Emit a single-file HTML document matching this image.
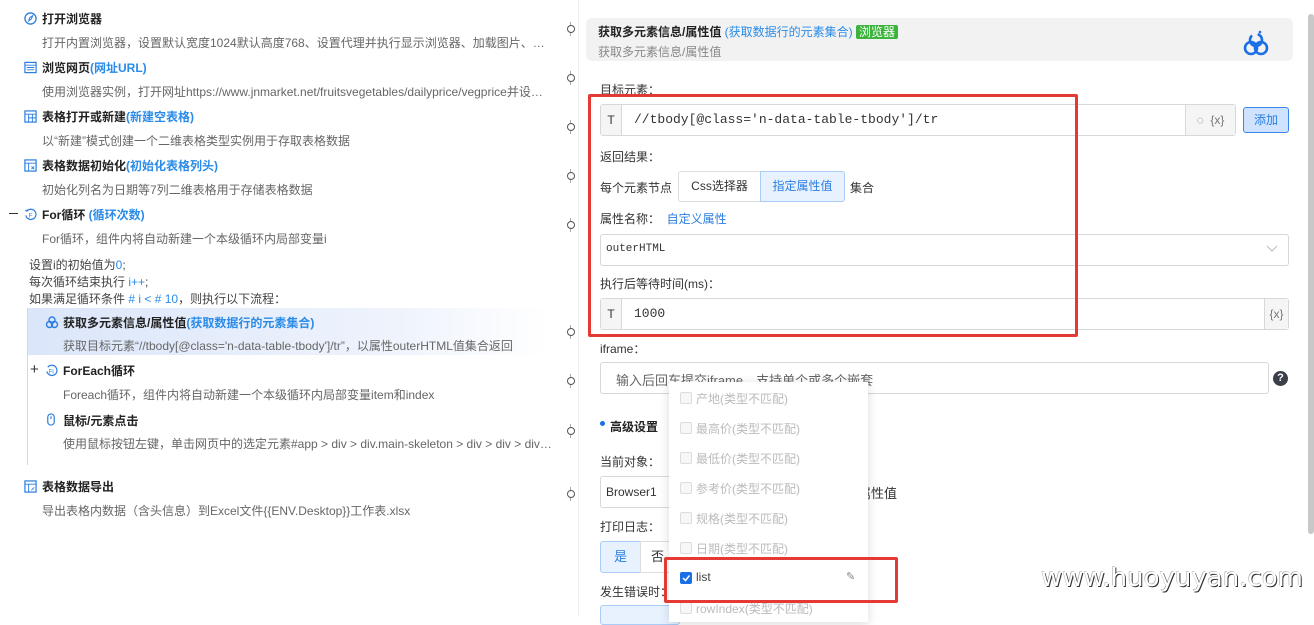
<!DOCTYPE html>
<html><head><meta charset="utf-8"><style>
*{box-sizing:border-box;margin:0;padding:0}
body{width:1314px;height:616px;overflow:hidden;background:#fff;font-family:"Liberation Sans","Noto Sans CJK SC",sans-serif;position:relative;color:#333}
.a{position:absolute;white-space:nowrap}
.t{font-size:12px;font-weight:bold;color:#222}
.d{font-size:12px;color:#666}
.b{color:#2a8be8}
.ic{position:absolute;width:13px;height:13px}
.con{position:absolute;width:6px;height:14px}
.con:before{content:"";position:absolute;left:0;top:3px;width:6px;height:6px;border:1px solid #555;border-radius:50%}
.con:after{content:"";position:absolute;left:2.5px;top:0;width:1px;height:14px;background:#555;clip-path:polygon(0 0,100% 0,100% 25%,0 25%,0 70%,100% 70%,100% 100%,0 100%)}
.lab{font-size:12px;color:#333}
.box{position:absolute;border:1px solid #d8d8d8;border-radius:3px;background:#fff}
.cell{position:absolute;top:0;bottom:0;background:#f5f5f5;border-right:1px solid #d8d8d8;font-size:12px;color:#333;display:flex;align-items:center;justify-content:center}
.mono{font-family:"Liberation Mono","DejaVu Sans Mono",monospace}
.cb{position:absolute;left:680px;width:12px;height:12px;border:1px solid #ddd;border-radius:2px;background:#f7f7f7}
.it{position:absolute;left:696px;font-size:12px;color:#bbb}
</style></head><body>

<!-- left panel -->
<svg class="ic" style="left:24px;top:12px" viewBox="0 0 14 14"><circle cx="7" cy="7" r="6" fill="none" stroke="#2a7de1" stroke-width="1.4"/><path d="M5 9.5l1.3-3.5 3-2-1.3 3.5z" fill="none" stroke="#2a7de1" stroke-width="1.1"/></svg>
<div class="a t" style="left:42px;top:10px">打开浏览器</div>
<div class="a d" style="left:42px;top:34px">打开内置浏览器，设置默认宽度1024默认高度768、设置代理并执行显示浏览器、加载图片、…</div>

<svg class="ic" style="left:24px;top:61px" viewBox="0 0 14 14"><rect x="1" y="1.5" width="12" height="11" fill="none" stroke="#2a7de1" stroke-width="1.3"/><path d="M1 4.5h12M3 7h8M3 9.5h8" stroke="#2a7de1" stroke-width="1"/></svg>
<div class="a t" style="left:42px;top:59px">浏览网页<span class="b">(网址URL)</span></div>
<div class="a d" style="left:42px;top:83px">使用浏览器实例，打开网址https://www.jnmarket.net/fruitsvegetables/dailyprice/vegprice并设…</div>

<svg class="ic" style="left:24px;top:110px" viewBox="0 0 14 14"><rect x="1" y="1" width="12" height="12" fill="none" stroke="#2a7de1" stroke-width="1.3"/><path d="M1 4.5h12M5 4.5v8.5M5 8.5h8M9 4.5v8.5" stroke="#2a7de1" stroke-width="1"/></svg>
<div class="a t" style="left:42px;top:108px">表格打开或新建<span class="b">(新建空表格)</span></div>
<div class="a d" style="left:42px;top:132px">以“新建”模式创建一个二维表格类型实例用于存取表格数据</div>

<svg class="ic" style="left:24px;top:159px" viewBox="0 0 14 14"><rect x="1" y="1" width="12" height="12" fill="none" stroke="#2a7de1" stroke-width="1.3"/><path d="M1 4.5h12M5 4.5v8.5M8 8l3 3M8 11l3-3" stroke="#2a7de1" stroke-width="1"/></svg>
<div class="a t" style="left:42px;top:157px">表格数据初始化<span class="b">(初始化表格列头)</span></div>
<div class="a d" style="left:42px;top:181px">初始化列名为日期等7列二维表格用于存储表格数据</div>

<div class="a" style="left:9px;top:213px;width:9px;height:1px;background:#333"></div>
<svg class="ic" style="left:24px;top:208px" viewBox="0 0 14 14"><path d="M3 3.5A5.5 5.5 0 1 1 2 8" fill="none" stroke="#2a7de1" stroke-width="1.3"/><path d="M1 2.5l2 1 .5-2" fill="none" stroke="#2a7de1" stroke-width="1"/><text x="5" y="10" font-size="7" fill="#2a7de1" font-family="Liberation Sans">F</text></svg>
<div class="a t" style="left:42px;top:206px">For循环 <span class="b">(循环次数)</span></div>
<div class="a d" style="left:42px;top:230px">For循环，组件内将自动新建一个本级循环内局部变量i</div>

<div class="a" style="left:29px;top:257px;font-size:12px;color:#444;line-height:17px">设置i的初始值为<span class="b">0</span>;<br>每次循环结束执行 <span class="b">i++</span>;<br>如果满足循环条件 <span class="b"># i &lt; # 10</span>，则执行以下流程：</div>

<div class="a" style="left:27px;top:308px;width:1px;height:157px;background:#d0d8e8"></div>
<div class="a" style="left:28px;top:308px;width:520px;height:47px;background:linear-gradient(90deg,#dbe6fa,#eef3fc 70%,#fff)"></div>
<svg class="ic" style="left:45px;top:315px;width:14px;height:14px" viewBox="0 0 14 14"><circle cx="7" cy="5" r="3" fill="none" stroke="#2a7de1" stroke-width="1.4"/><circle cx="4.5" cy="9.5" r="3" fill="none" stroke="#2a7de1" stroke-width="1.4"/><circle cx="9.5" cy="9.5" r="3" fill="none" stroke="#2a7de1" stroke-width="1.4"/></svg>
<div class="a t" style="left:63px;top:314px">获取多元素信息/属性值<span class="b">(获取数据行的元素集合)</span></div>
<div class="a d" style="left:63px;top:337px">获取目标元素“//tbody[@class='n-data-table-tbody']/tr”，以属性outerHTML值集合返回</div>

<div class="a" style="left:30px;top:361px;font-size:15px;color:#333">+</div>
<svg class="ic" style="left:45px;top:364px" viewBox="0 0 14 14"><path d="M3 3.5A5.5 5.5 0 1 1 2 8" fill="none" stroke="#2a7de1" stroke-width="1.3"/><text x="4" y="10" font-size="6.5" fill="#2a7de1" font-family="Liberation Sans">Fi</text></svg>
<div class="a t" style="left:63px;top:362px">ForEach循环</div>
<div class="a d" style="left:63px;top:386px">Foreach循环，组件内将自动新建一个本级循环内局部变量item和index</div>

<svg class="ic" style="left:46px;top:413px;width:10px" viewBox="0 0 10 14"><rect x="1.5" y="1" width="7" height="12" rx="3.5" fill="none" stroke="#2a7de1" stroke-width="1.3"/><path d="M5 3.5v3" stroke="#2a7de1" stroke-width="1.2"/></svg>
<div class="a t" style="left:63px;top:412px">鼠标/元素点击</div>
<div class="a d" style="left:63px;top:435px">使用鼠标按钮左键，单击网页中的选定元素#app &gt; div &gt; div.main-skeleton &gt; div &gt; div &gt; div…</div>

<svg class="ic" style="left:24px;top:480px" viewBox="0 0 14 14"><rect x="1" y="1" width="12" height="12" fill="none" stroke="#2a7de1" stroke-width="1.3"/><path d="M1 4.5h12M5 4.5v8.5M8 11l3-3" stroke="#2a7de1" stroke-width="1"/></svg>
<div class="a t" style="left:42px;top:478px">表格数据导出</div>
<div class="a d" style="left:42px;top:502px">导出表格内数据（含头信息）到Excel文件{{ENV.Desktop}}工作表.xlsx</div>

<div class="con" style="left:567px;top:22px"></div>
<div class="con" style="left:567px;top:71px"></div>
<div class="con" style="left:567px;top:120px"></div>
<div class="con" style="left:567px;top:169px"></div>
<div class="con" style="left:567px;top:218px"></div>
<div class="con" style="left:567px;top:325px"></div>
<div class="con" style="left:567px;top:374px"></div>
<div class="con" style="left:567px;top:424px"></div>
<div class="con" style="left:567px;top:487px"></div>
<div class="a" style="left:578px;top:0;width:1px;height:616px;background:#eee"></div>

<!-- right panel -->
<div class="a" style="left:586px;top:18px;width:707px;height:43px;background:#f2f2f2;border-radius:6px"></div>
<div class="a t" style="left:598px;top:23px">获取多元素信息/属性值 <span class="b" style="font-weight:normal">(获取数据行的元素集合)</span> <span style="background:#3cb33c;color:#fff;font-weight:normal;padding:0 3px;border-radius:2px">浏览器</span></div>
<div class="a d" style="left:598px;top:43px;color:#888">获取多元素信息/属性值</div>
<svg class="a" style="left:1241px;top:28px" width="30" height="30" viewBox="0 0 30 30"><circle cx="15" cy="12" r="6" fill="none" stroke="#1a6fe6" stroke-width="2.6" stroke-dasharray="30 6" transform="rotate(-60 15 12)"/><circle cx="10" cy="20" r="6" fill="none" stroke="#1a6fe6" stroke-width="2.6"/><circle cx="20" cy="20" r="6" fill="none" stroke="#1a6fe6" stroke-width="2.6"/><circle cx="19" cy="4" r="1.3" fill="#1a6fe6"/></svg>
<div class="a" style="left:1308px;top:14px;width:6px;height:520px;background:#c8c8c8;border-radius:3px"></div>

<div class="a lab" style="left:600px;top:81px">目标元素：</div>
<div class="box" style="left:600px;top:104px;width:636px;height:32px"><div class="cell" style="left:0;width:21px">T</div><div class="cell" style="left:auto;right:0;width:50px;border-right:0;border-left:1px solid #d8d8d8;color:#777">◌&nbsp;&nbsp;{x}</div></div>
<div class="a mono" style="left:634px;top:112px;font-size:13px;color:#333">//tbody[@class='n-data-table-tbody']/tr</div>
<div class="a" style="left:1243px;top:107px;width:46px;height:26px;background:#cfe3ff;border:1px solid #3a86ef;border-radius:3px;font-size:12px;color:#2a7de1;text-align:center;line-height:24px">添加</div>

<div class="a lab" style="left:600px;top:148px">返回结果：</div>
<div class="a lab" style="left:600px;top:179px">每个元素节点</div>
<div class="a" style="left:678px;top:171px;width:83px;height:31px;border:1px solid #ddd;border-radius:3px 0 0 3px;font-size:12px;line-height:29px;text-align:center">Css选择器</div>
<div class="a" style="left:760px;top:171px;width:85px;height:31px;border:1px solid #a9cdf7;background:#e8f2ff;border-radius:0 3px 3px 0;font-size:12px;line-height:29px;text-align:center;color:#2a7de1">指定属性值</div>
<div class="a lab" style="left:850px;top:179px">集合</div>
<div class="a lab" style="left:600px;top:210px">属性名称：&nbsp;&nbsp;<span style="color:#2a7de1">自定义属性</span></div>
<div class="box" style="left:600px;top:234px;width:689px;height:32px"></div>
<div class="a mono" style="left:606px;top:243px;font-size:11px;color:#333">outerHTML</div>
<svg class="a" style="left:1266px;top:245px" width="12" height="8"><path d="M1 1l5 5 5-5" fill="none" stroke="#bbb"/></svg>
<div class="a lab" style="left:600px;top:275px">执行后等待时间(ms)：</div>
<div class="box" style="left:600px;top:298px;width:689px;height:32px"><div class="cell" style="left:0;width:21px">T</div><div class="cell" style="left:auto;right:0;width:24px;border-right:0;border-left:1px solid #d8d8d8;color:#777">{x}</div></div>
<div class="a mono" style="left:634px;top:306px;font-size:13px">1000</div>
<div class="a" style="left:588px;top:94px;width:490px;height:243px;border:3px solid #e53935;border-radius:2px"></div>

<div class="a lab" style="left:600px;top:340px">iframe：</div>
<div class="box" style="left:600px;top:362px;width:669px;height:32px"></div>
<div class="a" style="left:616px;top:370px;font-size:13px;color:#666">输入后回车提交iframe，支持单个或多个嵌套</div>
<div class="a" style="left:1273px;top:371px;width:15px;height:15px;border-radius:50%;background:#3a3f4a;color:#fff;font-size:11px;font-weight:bold;text-align:center;line-height:15px">?</div>

<div class="a" style="left:600px;top:421px;width:5px;height:5px;border-radius:50%;background:#1a6fe6"></div>
<div class="a t" style="left:610px;top:418px">高级设置</div>
<div class="a lab" style="left:600px;top:453px">当前对象：</div>
<div class="box" style="left:600px;top:476px;width:90px;height:32px"></div>
<div class="a lab" style="left:606px;top:485px">Browser1</div>
<div class="a lab" style="left:858px;top:483px;font-size:13px">属性值</div>
<div class="a lab" style="left:600px;top:518px">打印日志：</div>
<div class="a" style="left:600px;top:541px;width:41px;height:32px;background:#e8f2ff;border:1px solid #a9cdf7;border-radius:3px 0 0 3px;color:#2a7de1;font-size:13px;text-align:center;line-height:30px">是</div>
<div class="a" style="left:640px;top:541px;width:40px;height:32px;border:1px solid #ddd;font-size:13px;line-height:30px;padding-left:10px">否</div>
<div class="a lab" style="left:600px;top:583px">发生错误时：</div>
<div class="a" style="left:600px;top:605px;width:80px;height:20px;background:#e8f2ff;border:1px solid #a9cdf7;border-radius:3px"></div>

<!-- dropdown -->
<div class="a" style="left:669px;top:382px;width:199px;height:240px;background:#fff;box-shadow:0 2px 10px rgba(0,0,0,.15)"></div>
<div class="cb" style="top:392px"></div><div class="it" style="top:390px">产地(类型不匹配)</div>
<div class="cb" style="top:422px"></div><div class="it" style="top:420px">最高价(类型不匹配)</div>
<div class="cb" style="top:452px"></div><div class="it" style="top:450px">最低价(类型不匹配)</div>
<div class="cb" style="top:482px"></div><div class="it" style="top:480px">参考价(类型不匹配)</div>
<div class="cb" style="top:512px"></div><div class="it" style="top:510px">规格(类型不匹配)</div>
<div class="cb" style="top:542px"></div><div class="it" style="top:540px">日期(类型不匹配)</div>
<div class="cb" style="top:572px;background:#1a6fe6;border-color:#1a6fe6"><svg width="10" height="10" style="position:absolute;left:0;top:0"><path d="M2 5l2.5 2.5L8.5 2.5" fill="none" stroke="#fff" stroke-width="1.5"/></svg></div><div class="it" style="top:570px;color:#444">list</div>
<div class="a" style="left:846px;top:570px;font-size:11px;color:#888">✎</div>
<div class="cb" style="top:602px"></div><div class="it" style="top:600px">rowIndex(类型不匹配)</div>
<div class="a" style="left:664px;top:557px;width:234px;height:46px;border:3px solid #e53935;border-radius:2px"></div>

<div class="a" style="left:1041px;top:563px;font-family:'DejaVu Sans',sans-serif;font-size:26px;color:#fff;letter-spacing:0;text-shadow:1px 1px 0 #333,-0.5px -0.5px 0 #999">www.huoyuyan.com</div>
</body></html>
